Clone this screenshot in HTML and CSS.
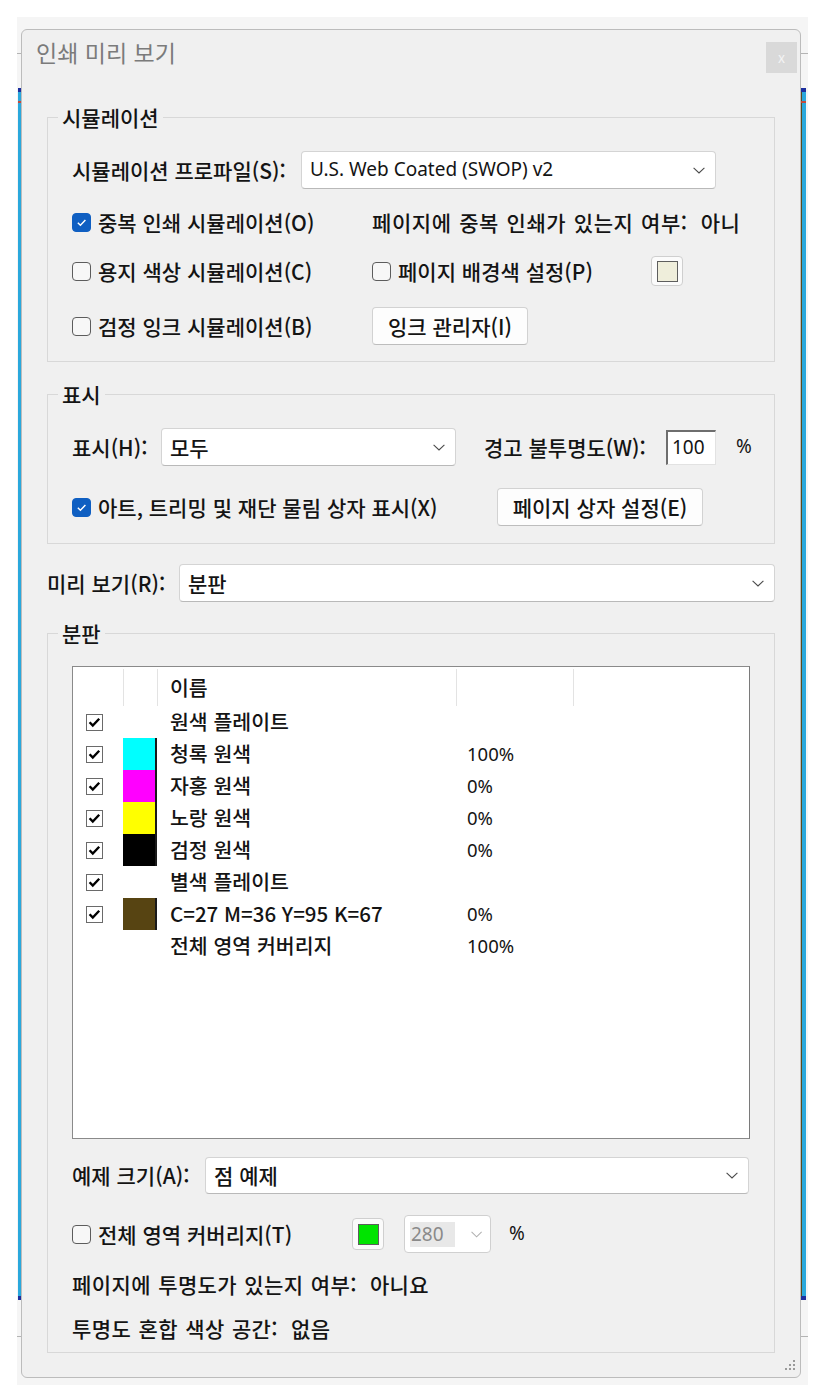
FILE: index.html
```html
<!DOCTYPE html>
<html lang="ko">
<head>
<meta charset="utf-8">
<title>인쇄 미리 보기</title>
<link rel="stylesheet" href="styles.css">
</head>
<body>
<div class="desk">
  <div class="dialog">
    <div class="titlebar">
      <span class="title">인쇄 미리 보기</span>
      <span class="close">x</span>
    </div>
    <div class="content">
      <fieldset class="group group-sim">
        <legend>시뮬레이션</legend>
        <div class="row row-profile">
          <span class="lbl lbl-profile">시뮬레이션 프로파일(S):</span>
          <div class="select sel-profile"><span class="latin">U.S. Web Coated (SWOP) v2</span><svg class="chev" viewBox="0 0 12 7"><path d="M0.6 0.8 L6 6 L11.4 0.8"/></svg></div>
        </div>
        <div class="row row-over">
          <span class="chk chk-left"><span class="box on"><svg viewBox="0 0 12 12"><path d="M2.6 6.2 L5 8.6 L9.6 3.6"/></svg></span><span>중복 인쇄 시뮬레이션(O)</span></span>
          <span class="info">페이지에 중복 인쇄가 있는지 여부:<span class="val">아니</span></span>
        </div>
        <div class="row row-paper">
          <span class="chk chk-left"><span class="box"></span><span>용지 색상 시뮬레이션(C)</span></span>
          <span class="chk chk-bg"><span class="box"></span><span>페이지 배경색 설정(P)</span></span>
          <span class="swatch-btn"><span class="swatch sw-paper"></span></span>
        </div>
        <div class="row row-ink">
          <span class="chk chk-left"><span class="box"></span><span>검정 잉크 시뮬레이션(B)</span></span>
          <span class="btn btn-ink">잉크 관리자(I)</span>
        </div>
      </fieldset>

      <fieldset class="group group-disp">
        <legend>표시</legend>
        <div class="row row-show">
          <span class="lbl lbl-show">표시(H):</span>
          <div class="select sel-show"><span>모두</span><svg class="chev" viewBox="0 0 12 7"><path d="M0.6 0.8 L6 6 L11.4 0.8"/></svg></div>
          <span class="lbl lbl-warn">경고 불투명도(W):</span>
          <span class="num-input latin">100</span>
          <span class="pct pct-warn latin">%</span>
        </div>
        <div class="row row-art">
          <span class="chk chk-art"><span class="box on"><svg viewBox="0 0 12 12"><path d="M2.6 6.2 L5 8.6 L9.6 3.6"/></svg></span><span>아트, 트리밍 및 재단 물림 상자 표시(X)</span></span>
          <span class="btn btn-pagebox">페이지 상자 설정(E)</span>
        </div>
      </fieldset>

      <div class="row row-preview">
        <span class="lbl lbl-preview">미리 보기(R):</span>
        <div class="select sel-preview"><span>분판</span><svg class="chev" viewBox="0 0 12 7"><path d="M0.6 0.8 L6 6 L11.4 0.8"/></svg></div>
      </div>

      <fieldset class="group group-sep">
        <legend>분판</legend>
        <div class="list">
          <div class="list-head">
            <span class="c c1"></span><span class="c c2"></span><span class="c c3">이름</span><span class="c c4"></span><span class="c c5"></span>
          </div>
          <div class="list-row">
            <span class="c1"><svg class="lchk" viewBox="0 0 17 17"><rect x="0.5" y="0.5" width="16" height="16"/><path d="M3.6 8.2 L6.8 11.6 L13.2 4.8"/></svg></span>
            <span class="c2"></span><span class="c3">원색 플레이트</span><span class="c4"></span>
          </div>
          <div class="list-row">
            <span class="c1"><svg class="lchk" viewBox="0 0 17 17"><rect x="0.5" y="0.5" width="16" height="16"/><path d="M3.6 8.2 L6.8 11.6 L13.2 4.8"/></svg></span>
            <span class="c2 sw sw-c"></span><span class="c3">청록 원색</span><span class="c4">100%</span>
          </div>
          <div class="list-row">
            <span class="c1"><svg class="lchk" viewBox="0 0 17 17"><rect x="0.5" y="0.5" width="16" height="16"/><path d="M3.6 8.2 L6.8 11.6 L13.2 4.8"/></svg></span>
            <span class="c2 sw sw-m"></span><span class="c3">자홍 원색</span><span class="c4">0%</span>
          </div>
          <div class="list-row">
            <span class="c1"><svg class="lchk" viewBox="0 0 17 17"><rect x="0.5" y="0.5" width="16" height="16"/><path d="M3.6 8.2 L6.8 11.6 L13.2 4.8"/></svg></span>
            <span class="c2 sw sw-y"></span><span class="c3">노랑 원색</span><span class="c4">0%</span>
          </div>
          <div class="list-row">
            <span class="c1"><svg class="lchk" viewBox="0 0 17 17"><rect x="0.5" y="0.5" width="16" height="16"/><path d="M3.6 8.2 L6.8 11.6 L13.2 4.8"/></svg></span>
            <span class="c2 sw sw-k"></span><span class="c3">검정 원색</span><span class="c4">0%</span>
          </div>
          <div class="list-row">
            <span class="c1"><svg class="lchk" viewBox="0 0 17 17"><rect x="0.5" y="0.5" width="16" height="16"/><path d="M3.6 8.2 L6.8 11.6 L13.2 4.8"/></svg></span>
            <span class="c2"></span><span class="c3">별색 플레이트</span><span class="c4"></span>
          </div>
          <div class="list-row">
            <span class="c1"><svg class="lchk" viewBox="0 0 17 17"><rect x="0.5" y="0.5" width="16" height="16"/><path d="M3.6 8.2 L6.8 11.6 L13.2 4.8"/></svg></span>
            <span class="c2 sw sw-spot"></span><span class="c3">C=27 M=36 Y=95 K=67</span><span class="c4">0%</span>
          </div>
          <div class="list-row">
            <span class="c1"></span>
            <span class="c2"></span><span class="c3">전체 영역 커버리지</span><span class="c4">100%</span>
          </div>
        </div>

        <div class="row row-sample">
          <span class="lbl lbl-sample">예제 크기(A):</span>
          <div class="select sel-sample"><span>점 예제</span><svg class="chev" viewBox="0 0 12 7"><path d="M0.6 0.8 L6 6 L11.4 0.8"/></svg></div>
        </div>
        <div class="row row-cov">
          <span class="chk chk-cov"><span class="box"></span><span>전체 영역 커버리지(T)</span></span>
          <span class="swatch-btn"><span class="swatch sw-green"></span></span>
          <span class="combo"><span class="combo-val latin">280</span><svg class="chev chev-dis" viewBox="0 0 12 7"><path d="M0.6 0.8 L6 6 L11.4 0.8"/></svg></span>
          <span class="pct pct-cov latin">%</span>
        </div>
        <div class="row row-text row-transp">
          <span>페이지에 투명도가 있는지 여부:</span><span class="val">아니요</span>
        </div>
        <div class="row row-text row-blend">
          <span>투명도 혼합 색상 공간:</span><span class="val">없음</span>
        </div>
      </fieldset>
    </div>
    <div class="footer">
      <svg class="grip" viewBox="0 0 15 15"><rect x="11" y="1" width="2" height="2"/><rect x="7" y="5" width="2" height="2"/><rect x="11" y="5" width="2" height="2"/><rect x="3" y="9" width="2" height="2"/><rect x="7" y="9" width="2" height="2"/><rect x="11" y="9" width="2" height="2"/></svg>
    </div>
  </div>
</div>
</body>
</html>
```
FILE: styles.css
```css
* { box-sizing: border-box; }

html, body {
  margin: 0;
  padding: 0;
  background: #ffffff;
}

body {
  font-family: "Noto Sans CJK KR", "Noto Sans", sans-serif;
  font-size: 21px;
  font-weight: 500;
  line-height: 1.25;
  color: #141414;
}

.latin {
  font-family: "Noto Sans", "Noto Sans CJK KR", sans-serif;
  font-size: 19px;
  font-weight: 400;
}

/* backdrop behind the dialog */
.desk {
  margin: 17px 0 0 17px;
  width: 791px;
  height: 1368px;
  padding: 12px 7px 7px 4px;
  background-color: #f5f5f5;
  background-repeat: no-repeat;
  background-image:
    linear-gradient(#1d2f9e, #1d2f9e),
    linear-gradient(#c44a3c, #c44a3c),
    linear-gradient(#1d2f9e, #1d2f9e),
    linear-gradient(#2aa8dc, #2aa8dc),
    linear-gradient(#1d2f9e, #1d2f9e),
    linear-gradient(#c44a3c, #c44a3c),
    linear-gradient(#1d2f9e, #1d2f9e),
    linear-gradient(#5b4a1e, #5b4a1e),
    linear-gradient(#2aa8dc, #2aa8dc),
    linear-gradient(#b4b4b4, #b4b4b4),
    linear-gradient(#b4b4b4, #b4b4b4);
  background-size:
    3px 4px,
    3px 2px,
    3px 4px,
    3px 1212px,
    5px 4px,
    5px 2px,
    5px 4px,
    1px 1212px,
    4px 1212px,
    100% 1px,
    100% 1px;
  background-position:
    1px 71px,
    1px 84px,
    1px 1279px,
    1px 71px,
    784px 71px,
    784px 84px,
    784px 1279px,
    784px 71px,
    785px 71px,
    0 36px,
    0 1319px;
}

.dialog {
  width: 780px;
  height: 1349px;
  background: #f0f0f0;
  border: 1px solid #bcbcbc;
  border-radius: 6px;
  display: flex;
  flex-direction: column;
}

.titlebar {
  height: 59px;
  display: flex;
  justify-content: space-between;
  align-items: flex-start;
  padding: 0 3px 0 14px;
}

.title {
  margin-top: 8px;
  font-size: 23px;
  font-weight: 400;
  line-height: 28px;
  color: #7b7b7b;
}

.close {
  margin-top: 12px;
  width: 31px;
  height: 31px;
  background: #d9d9d9;
  color: #f3f3f3;
  font-size: 14px;
  font-weight: 400;
  line-height: 31px;
  text-align: center;
}

.content {
  padding: 16px 25px 0 25px;
  display: flex;
  flex-direction: column;
}

/* group boxes */
.group {
  margin: 0;
  border: 1px solid #d8d8d8;
  padding: 0 0 0 24px;
  min-width: 0;
}

.group legend {
  margin-left: -14px;
  padding: 0 4px;
  line-height: 24px;
  font-size: 21px;
}

.row {
  display: flex;
  align-items: center;
}

.lbl { white-space: nowrap; }

/* select boxes */
.select {
  display: flex;
  align-items: center;
  justify-content: space-between;
  height: 38px;
  background: #ffffff;
  border: 1px solid #d4d4d4;
  border-bottom-color: #b9b9b9;
  border-radius: 4px;
  padding: 0 10px 0 8px;
  white-space: nowrap;
}

.chev {
  width: 12px;
  height: 7px;
  fill: none;
  stroke: #4a4a4a;
  stroke-width: 1.1;
}

.chev-dis { stroke: #b0b0b0; }

/* checkboxes */
.chk {
  display: flex;
  align-items: center;
  gap: 7px;
  white-space: nowrap;
}

.box {
  width: 19px;
  height: 19px;
  flex: none;
  border: 1px solid #5c5c5c;
  border-radius: 4px;
  background: #f7f7f7;
  display: flex;
  align-items: center;
  justify-content: center;
}

.box.on {
  background: #0f5fc2;
  border-color: #0f5fc2;
}

.box svg {
  width: 13px;
  height: 13px;
  fill: none;
  stroke: #ffffff;
  stroke-width: 1.3;
}

/* buttons */
.btn {
  display: flex;
  align-items: center;
  justify-content: center;
  height: 38px;
  background: #fdfdfd;
  border: 1px solid #d2d2d2;
  border-bottom-color: #bdbdbd;
  border-radius: 4px;
  white-space: nowrap;
}

.swatch-btn {
  width: 32px;
  height: 30px;
  background: #fbfbfb;
  border: 1px solid #cfcfcf;
  border-radius: 4px;
  display: flex;
  align-items: center;
  justify-content: center;
}

.swatch {
  width: 21px;
  height: 21px;
  border: 1px solid #5e5e5e;
}

.sw-paper { background: #efeedb; }
.sw-green { background: #00e400; }

/* simulation group */
.group-sim { padding-top: 22px; padding-bottom: 16px; }

.lbl-profile { width: 229px; }
.sel-profile { width: 415px; }

.row-over { margin-top: 18px; height: 30px; }
.row-paper { margin-top: 19px; height: 30px; }
.row-ink { margin-top: 21px; }

.chk-left { width: 300px; }
.chk-bg { width: 279px; }

.info { white-space: nowrap; letter-spacing: 0.6px; word-spacing: 1px; }
.val { margin-left: 13px; }

.btn-ink { width: 156px; }

/* display group */
.group-disp { margin-top: 20px; padding-top: 22px; padding-bottom: 17px; }

.lbl-show { width: 89px; }
.sel-show { width: 295px; }
.lbl-warn { margin-left: 28px; width: 182px; }

.num-input {
  width: 50px;
  height: 35px;
  background: #ffffff;
  border: 1px solid;
  border-color: #6e6e6e #e2e2e2 #e2e2e2 #6e6e6e;
  border-width: 2px 1px 1px 2px;
  padding-left: 4px;
  line-height: 30px;
}

.pct-warn { margin-left: 20px; }

.row-art { margin-top: 22px; }
.chk-art { width: 425px; }
.btn-pagebox { width: 206px; }

/* preview row */
.row-preview { margin-top: 20px; }
.lbl-preview { width: 132px; }
.sel-preview { width: 596px; }

/* separations group */
.group-sep { margin-top: 19px; padding-top: 21px; padding-bottom: 9px; }

.list {
  width: 678px;
  height: 473px;
  background: #ffffff;
  border: 1px solid #8a8a8a;
  border-right-color: #7a7a7a;
  font-size: 20.5px;
}

.list-head,
.list-row {
  display: grid;
  grid-template-columns: 50px 34px 299px 117px 1fr;
  align-items: center;
}

.list-head {
  margin-top: 2px;
  height: 37px;
  align-items: stretch;
}

.list-head .c2,
.list-head .c3,
.list-head .c4,
.list-head .c5 {
  border-left: 1px solid #e3e3e3;
  display: flex;
  align-items: center;
}

.list-head .c3 { padding-left: 12px; }

.list-row { height: 32px; }

.list-row .c1 {
  padding-left: 13px;
  display: flex;
  align-items: center;
}

.lchk {
  width: 17px;
  height: 17px;
}

.lchk rect { fill: #ffffff; stroke: #6a6a6a; }
.lchk path { fill: none; stroke: #000000; stroke-width: 2.4; }

.list-row .c2 { height: 32px; }
.list-row .c3 { padding-left: 13px; white-space: nowrap; }
.list-row .c4 {
  padding-left: 11px;
  font-family: "Noto Sans", sans-serif;
  font-size: 18.5px;
  font-weight: 400;
}

.sw { border-right: 2px solid #1a1a1a; }
.sw-c { background: #00ffff; }
.sw-m { background: #ff00ff; }
.sw-y { background: #ffff00; }
.sw-k { background: #000000; }
.sw-spot { background: #574412; }

.row-sample { margin-top: 18px; }
.lbl-sample { width: 133px; }
.sel-sample { width: 544px; height: 37px; }

.row-cov { margin-top: 21px; height: 38px; }
.chk-cov { width: 280px; }
.row-cov .swatch-btn { height: 32px; }

.combo {
  margin-left: 20px;
  width: 87px;
  height: 38px;
  background: #ffffff;
  border: 1px solid #d0d0d0;
  border-radius: 4px;
  display: flex;
  align-items: center;
  padding: 0 8px 0 5px;
  gap: 16px;
}

.combo-val {
  width: 48px;
  height: 25px;
  background: #e8e8e8;
  color: #8a8a8a;
  line-height: 25px;
  padding-left: 1px;
}

.pct-cov { margin-left: 18px; }

.row-text { height: 30px; white-space: nowrap; letter-spacing: 0.4px; word-spacing: 1px; }
.row-transp { margin-top: 16px; }
.row-blend { margin-top: 14px; }

.footer {
  margin-top: auto;
  display: flex;
  justify-content: flex-end;
  padding: 0 3px 3px 0;
}

.grip {
  width: 15px;
  height: 15px;
  fill: #9a9a9a;
}
```
